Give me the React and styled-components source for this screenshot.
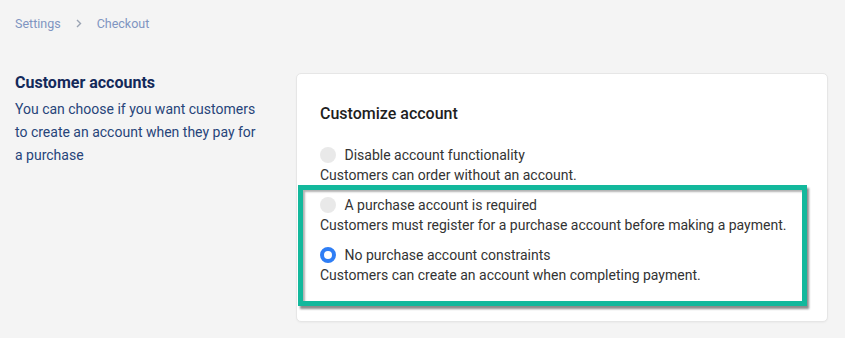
import React, { useState } from 'react';
import styled, { createGlobalStyle } from 'styled-components';

const GlobalStyle = createGlobalStyle`
  html, body {
    margin: 0;
    padding: 0;
    background: #f4f4f4;
  }
  body {
    font-family: Roboto, "Liberation Sans", Arial, sans-serif;
    -webkit-font-smoothing: antialiased;
  }
`;

const Page = styled.div`
  padding: 13px 17px 16px 15px;
  height: 338px;
  box-sizing: border-box;
  overflow: hidden;
`;

const Crumbs = styled.nav`
  display: flex;
  align-items: center;
  gap: 15px;
  height: 20px;
  font-size: 12.5px;
  color: #7f95c1;
`;

const Main = styled.div`
  display: grid;
  grid-template-columns: 281px 1fr;
  margin-top: 40px;
  align-items: start;
`;

const Intro = styled.div`
  padding-right: 31px;

  h2 {
    margin: 0 0 5px;
    font-size: 16px;
    line-height: 20px;
    font-weight: 700;
    color: #13295a;
  }

  p {
    margin: 0;
    font-size: 14px;
    line-height: 23px;
    color: #27447a;
  }
`;

const Card = styled.section`
  background: #fff;
  border: 1px solid #e6e6e6;
  border-radius: 5px;
  box-shadow: 0 1px 2px rgba(0, 0, 0, 0.04);
  padding: 28px 23px 15px;
`;

const CardTitle = styled.h3`
  margin: 0 0 19px;
  font-size: 16px;
  line-height: 24px;
  font-weight: 500;
  color: #1e1e1e;
`;

const Highlight = styled.div`
  display: flex;
  flex-direction: column;
  gap: 10px;
  margin: 0 -3px 0 -22px;
  padding: 5px 0 16px 17px;
  border: 5px solid #13b89c;
  box-shadow: 2px 3px 2px rgba(0, 0, 0, 0.45), inset 2px 2px 2px rgba(0, 0, 0, 0.3);
`;

const Option = styled.label`
  display: block;
  cursor: pointer;
`;

const OptionRow = styled.span`
  display: flex;
  align-items: center;
  gap: 10px;
  height: 20px;
  font-size: 14px;
  color: #333;
`;

const Radio = styled.span`
  width: 16px;
  height: 16px;
  border-radius: 50%;
  box-sizing: border-box;
  margin-left: -0.5px;
  margin-right: -1px;
  background: ${({ checked }) => (checked ? '#fff' : '#e9e9e9')};
  border: ${({ checked }) => (checked ? '4.5px solid #2f7ef5' : 'none')};
`;

const Hint = styled.span`
  display: block;
  font-size: 14px;
  line-height: 20px;
  color: #333;
`;

const Chevron = () => (
  <svg width="6" height="9" viewBox="0 0 6 9" fill="none">
    <path d="M1 1l3.5 3.5L1 8" stroke="#9aa3b3" strokeWidth="1.4" />
  </svg>
);

const options = [
  {
    id: 'disabled',
    label: 'Disable account functionality',
    hint: 'Customers can order without an account.',
  },
  {
    id: 'required',
    label: 'A purchase account is required',
    hint: 'Customers must register for a purchase account before making a payment.',
  },
  {
    id: 'none',
    label: 'No purchase account constraints',
    hint: 'Customers can create an account when completing payment.',
  },
];

const AccountOption = ({ option, selected, onSelect }) => (
  <Option onClick={() => onSelect(option.id)}>
    <OptionRow>
      <Radio checked={selected === option.id} />
      {option.label}
    </OptionRow>
    <Hint>{option.hint}</Hint>
  </Option>
);

const App = () => {
  const [selected, setSelected] = useState('none');
  const [first, ...rest] = options;

  return (
    <Page>
      <GlobalStyle />
      <Crumbs>
        <span>Settings</span>
        <Chevron />
        <span>Checkout</span>
      </Crumbs>

      <Main>
        <Intro>
          <h2>Customer accounts</h2>
          <p>You can choose if you want customers to create an account when they pay for a purchase</p>
        </Intro>

        <Card>
          <CardTitle>Customize account</CardTitle>
          <AccountOption option={first} selected={selected} onSelect={setSelected} />
          <Highlight>
            {rest.map(option => (
              <AccountOption
                key={option.id}
                option={option}
                selected={selected}
                onSelect={setSelected}
              />
            ))}
          </Highlight>
        </Card>
      </Main>
    </Page>
  );
};

export default App;
